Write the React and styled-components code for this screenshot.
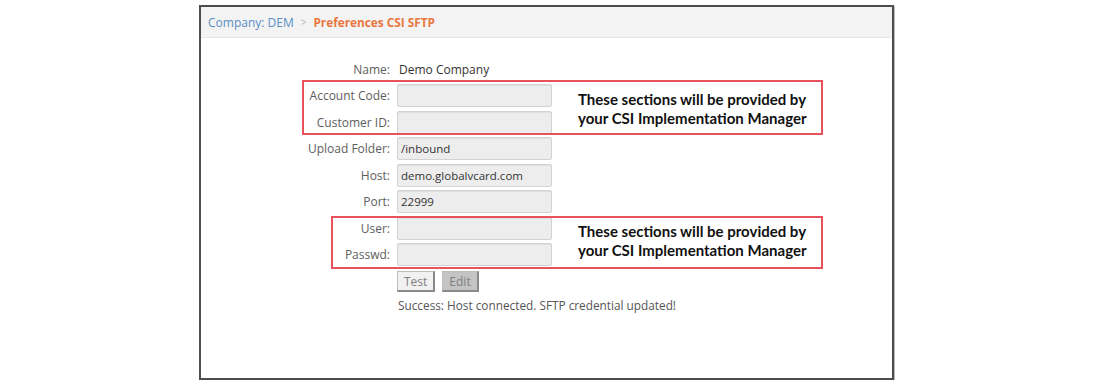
import React from "react";
import styled, { createGlobalStyle } from "styled-components";

const GlobalStyle = createGlobalStyle`
  body {
    margin: 0;
    background: #fff;
    font-family: "Open Sans", "Liberation Sans", sans-serif;
  }
`;

const fields = {
  account: [
    { label: "Account Code:", value: "" },
    { label: "Customer ID:", value: "" },
  ],
  server: [
    { label: "Upload Folder:", value: "/inbound" },
    { label: "Host:", value: "demo.globalvcard.com" },
    { label: "Port:", value: "22999" },
  ],
  login: [
    { label: "User:", value: "" },
    { label: "Passwd:", value: "" },
  ],
};

const Field = ({ label, value }) => (
  <Row>
    <Label>{label}</Label>
    <Input readOnly value={value} />
  </Row>
);

const Note = () => (
  <NoteText>
    These sections will be provided by
    <br />
    your CSI Implementation Manager
  </NoteText>
);

const App = () => {
  return (
    <Page>
      <GlobalStyle />
      <Frame>
        <Header>
          <Crumb>Company: DEM</Crumb>
          <Chevron>&gt;</Chevron>
          <Title>Preferences CSI SFTP</Title>
        </Header>
        <Form>
          <Row>
            <Label>Name:</Label>
            <Value>Demo Company</Value>
          </Row>
          <Group>
            <Fields>
              {fields.account.map((f) => (
                <Field key={f.label} {...f} />
              ))}
            </Fields>
            <Note />
            <Callout $left={101} $width={521} $top={-4} $bottom={-1} />
          </Group>
          {fields.server.map((f) => (
            <Field key={f.label} {...f} />
          ))}
          <Group>
            <Fields>
              {fields.login.map((f) => (
                <Field key={f.label} {...f} />
              ))}
            </Fields>
            <Note />
            <Callout $left={130} $width={492} $top={-1} $bottom={-3} />
          </Group>
          <ButtonRow>
            <span />
            <Buttons>
              <Button>Test</Button>
              <Button $pressed>Edit</Button>
            </Buttons>
          </ButtonRow>
          <StatusRow>
            <span />
            <Status>Success: Host connected. SFTP credential updated!</Status>
          </StatusRow>
        </Form>
      </Frame>
    </Page>
  );
};

export default App;

const Page = styled.div`
  padding: 5px 0 0 199px;
`;

const Frame = styled.div`
  width: 691px;
  height: 371px;
  border: 2px solid #4d4d4d;
  box-shadow: 1px 1px 0 #bdbdbd, 0 3px 0 #e6e6e6;
  background: #fff;
`;

const Header = styled.div`
  height: 30px;
  display: flex;
  align-items: center;
  padding-left: 7px;
  background: #f3f3f3;
  border-bottom: 1px solid #e7e7e7;
  font-size: 12px;
`;

const Crumb = styled.span`
  color: #5a8fc6;
`;

const Chevron = styled.span`
  color: #b5b5b5;
  font-size: 10px;
  margin: 0 7px 0 7px;
`;

const Title = styled.span`
  color: #e9773f;
  font-weight: 700;
  font-size: 11.8px;
`;

const Form = styled.div`
  display: flex;
  flex-direction: column;
  gap: 3.5px;
  padding-top: 19.5px;
`;

const Row = styled.div`
  display: grid;
  grid-template-columns: 189px 155px;
  column-gap: 7px;
  align-items: center;
  height: 23px;
  font-size: 12px;
`;

const Label = styled.span`
  text-align: right;
  color: #5e5e5e;
`;

const Value = styled.span`
  color: #333;
  padding-left: 2px;
`;

const Input = styled.input`
  box-sizing: border-box;
  height: 23px;
  width: 155px;
  margin: 0;
  padding: 0 3px;
  border: 1px solid #d2d2d2;
  border-radius: 2px;
  background: #ededed;
  box-shadow: inset 0 1px 1px rgba(0, 0, 0, 0.06);
  font: inherit;
  font-size: 11.5px;
  color: #333;
  outline: none;
`;

const Group = styled.div`
  position: relative;
  display: flex;
  align-items: center;
`;

const Fields = styled.div`
  display: flex;
  flex-direction: column;
  gap: 3.5px;
`;

const Callout = styled.div`
  position: absolute;
  left: ${(p) => p.$left}px;
  width: ${(p) => p.$width}px;
  top: ${(p) => p.$top}px;
  bottom: ${(p) => p.$bottom}px;
  box-sizing: border-box;
  border: 2px solid #e8525b;
  pointer-events: none;
`;

const NoteText = styled.div`
  margin-left: 26px;
  font-family: Lato, "Liberation Sans", sans-serif;
  font-weight: 700;
  font-size: 15px;
  line-height: 19px;
  color: #111;
`;

const ButtonRow = styled(Row)`
  height: 22px;
  margin-top: 1px;
`;

const Buttons = styled.div`
  display: flex;
  gap: 7px;
`;

const Button = styled.button`
  height: 21px;
  padding: 0 6px;
  font-family: "Open Sans", sans-serif;
  font-size: 12px;
  color: #808080;
  background: ${(p) => (p.$pressed ? "#c4c4c4" : "#f1f1f1")};
  border: 1px solid #bdbdbd;
  border-right: 2px solid #8a8a8a;
  border-bottom: 2px solid #8a8a8a;
  border-radius: 0;
`;

const StatusRow = styled(Row)`
  height: 18px;
`;

const Status = styled.span`
  color: #555;
  font-size: 11.8px;
  white-space: nowrap;
  padding-left: 1px;
`;
